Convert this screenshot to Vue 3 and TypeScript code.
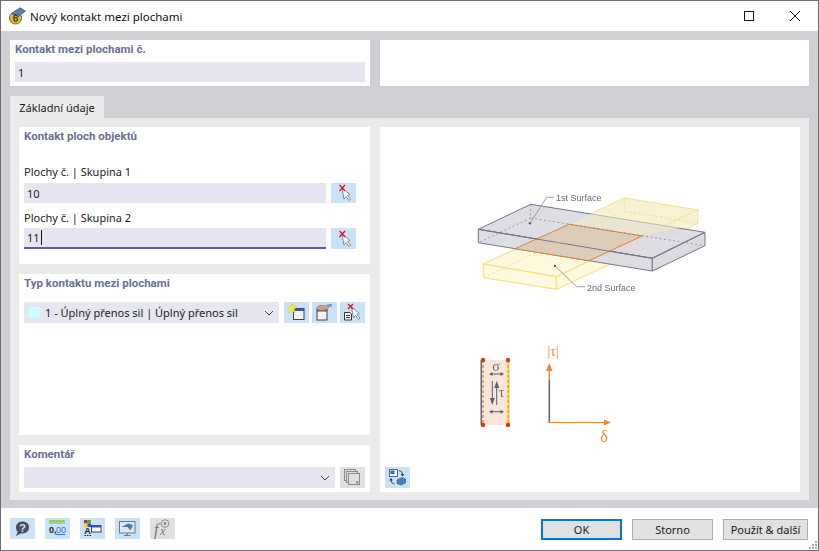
<script setup lang="ts">
const footerIcons = ["help", "units", "colors", "view", "formula"];
</script>

<template>
  <div class="dialog">
    <header class="titlebar">
      <svg class="app-icon" width="18" height="18" viewBox="0 0 18 18">
        <circle cx="6.500" cy="11" r="6" fill="#e6bf2e" stroke="#6b5a1c" stroke-width=".9" />
        <path d="M2.500 6.500 L11 .8 L16.500 4 L9 10 Z" fill="#5b7fa8" stroke="#34506f" stroke-width=".7" />
        <text x="6.500" y="15" class="app-six">6</text>
      </svg>
      <span class="title">Nový kontakt mezi plochami</span>
      <div class="window-buttons">
        <svg width="12" height="12" viewBox="0 0 12 12"><rect x="1.500" y="1.500" width="9" height="9" fill="none" stroke="#111" /></svg>
        <svg width="12" height="12" viewBox="0 0 12 12"><path d="M1 1 L11 11 M11 1 L1 11" stroke="#222" fill="none" /></svg>
      </div>
    </header>

    <main class="body">
      <div class="top-row">
        <section class="panel number-panel">
          <h3>Kontakt mezi plochami č.</h3>
          <div class="field">1</div>
        </section>
        <section class="panel"></section>
      </div>

      <div class="tab">Základní údaje</div>

      <div class="tab-content">
        <div class="left-col">
          <section class="panel objects">
            <h3>Kontakt ploch objektů</h3>
            <label class="first-label">Plochy č. | Skupina 1</label>
            <div class="input-row">
              <div class="field">10</div>
              <button class="icon-btn">
                <svg width="25" height="20" viewBox="0 0 25 20">
                  <path d="M11 5 L13 16 L15 13.500 L18 17.500 L19.500 16 L16.500 12.500 L19 11.500 Z" fill="#fff" stroke="#77808a" stroke-width=".9" />
                  <path d="M8.500 2 L14 8 M14 2 L8.500 8" stroke="#e0102a" stroke-width="1.300" />
                </svg>
              </button>
            </div>
            <label>Plochy č. | Skupina 2</label>
            <div class="input-row">
              <div class="field active"><span>11</span><i class="caret"></i></div>
              <button class="icon-btn tall">
                <svg width="25" height="20" viewBox="0 0 25 20">
                  <path d="M11 5 L13 16 L15 13.500 L18 17.500 L19.500 16 L16.500 12.500 L19 11.500 Z" fill="#fff" stroke="#77808a" stroke-width=".9" />
                  <path d="M8.500 2 L14 8 M14 2 L8.500 8" stroke="#e0102a" stroke-width="1.300" />
                </svg>
              </button>
            </div>
          </section>

          <section class="panel type">
            <h3>Typ kontaktu mezi plochami</h3>
            <div class="input-row type-row">
              <div class="select type-select">
                <i class="swatch"></i>
                <span>1 - Úplný přenos sil | Úplný přenos sil</span>
                <svg class="chevron" width="10" height="6" viewBox="0 0 10 6"><path d="M1 1 L5 5 L9 1" fill="none" stroke="#444" /></svg>
              </div>
              <button class="icon-btn">
                <svg width="25" height="21" viewBox="0 0 25 21">
                  <rect x="9.500" y="6.500" width="10.500" height="11" fill="#f2f2f2" stroke="#444" />
                  <rect x="9.500" y="6.500" width="10.500" height="2.500" fill="#3a55b0" />
                  <path d="M8 1 L9.300 4.700 L13.200 4.800 L10.100 7.200 L11.200 11 L8 8.800 L4.800 11 L5.900 7.200 L2.800 4.800 L6.700 4.700 Z" fill="#f6ee2c" stroke="#d8c81e" stroke-width=".4" />
                </svg>
              </button>
              <button class="icon-btn">
                <svg width="25" height="21" viewBox="0 0 25 21">
                  <rect x="5" y="7.500" width="10" height="10.500" fill="#f2f2f2" stroke="#444" />
                  <rect x="5" y="7.500" width="10" height="2" fill="#555" />
                  <path d="M4 6 Q7 2 12 3.500 L17 4 L16 7 L11 8.500 Q6 9 4 6 Z" fill="#c9a183" stroke="#8c705c" stroke-width=".5" />
                  <path d="M14 3 Q17 1.500 20 2 L19.500 5 L16 4.500 Z" fill="#6f97cf" />
                </svg>
              </button>
              <button class="icon-btn">
                <svg width="25" height="21" viewBox="0 0 25 21">
                  <path d="M11.500 5 L13.500 16 L15.500 13.500 L18.500 17.500 L20 16 L17 12.500 L19.500 11.500 Z" fill="#fff" stroke="#77808a" stroke-width=".9" />
                  <path d="M8 2 L13 7 M13 2 L8 7" stroke="#e0102a" stroke-width="1.300" />
                  <path d="M4.500 10.500 H9.500 L11.500 12 V18 H4.500 Z" fill="#fff" stroke="#333" />
                  <path d="M6 13.500 H10 M6 15.500 H10" stroke="#333" />
                </svg>
              </button>
            </div>
          </section>

          <section class="panel comment">
            <h3>Komentář</h3>
            <div class="input-row comment-row">
              <div class="select">
                <svg class="chevron" width="10" height="6" viewBox="0 0 10 6"><path d="M1 1 L5 5 L9 1" fill="none" stroke="#444" /></svg>
              </div>
              <button class="icon-btn disabled">
                <svg width="25" height="21" viewBox="0 0 25 21" fill="#e0e0e0" stroke="#8c8c8c">
                  <rect x="4.500" y="2.500" width="11" height="11" />
                  <rect x="6.500" y="4.500" width="11" height="11" />
                  <rect x="8.500" y="6.500" width="11" height="11" />
                  <rect x="16" y="14" width="2.500" height="2.500" fill="#999" stroke="none" />
                </svg>
              </button>
            </div>
          </section>
        </div>

        <section class="panel preview">
          <svg class="diagram" viewBox="380 127 420 340" width="420" height="340">
            <!-- yellow slab, lower -->
            <g stroke="#f5dc7a" stroke-width="1" stroke-linejoin="round">
              <path d="M483.300 264 L556.300 276.700 L697.700 210 L624.300 198 Z" fill="#fff9dd" />
              <path d="M483.300 264 L556.300 276.700 L556.300 289.300 L483.300 277.700 Z" fill="#fff9dd" />
              <path d="M556.300 276.700 L697.700 210 L697.700 223.300 L556.300 289.300 Z" fill="#fff9dd" />
            </g>
            <!-- grey slab -->
            <g stroke="#77758a" stroke-width="1" stroke-linejoin="round">
              <path d="M530.700 204.300 L705 232.300 L652.300 258.300 L478.300 229.300 Z" fill="#d8d7df" fill-opacity=".85" />
              <path d="M478.300 229.300 L652.300 258.300 L652.300 271 L478.300 242.700 Z" fill="#d8d7df" fill-opacity=".85" />
              <path d="M652.300 258.300 L705 232.300 L705 245.700 L652.300 271 Z" fill="#dcdbe2" />
            </g>
            <!-- overlap of both slabs -->
            <path d="M624.300 198 L697.700 210 L697.700 223.300 L642 236 L569.300 224.300 Z" fill="#f2ecc8" fill-opacity=".55" stroke="none" />
            <path d="M569.300 224.300 L642 236 L589 260.700 L515 248.700 Z" fill="#ddcdb8" stroke="#d8853c" stroke-width="1" />
            <path d="M478.300 229.300 L652.300 258.300 L705 232.300" fill="none" stroke="#77758a" />
            <!-- hidden edges -->
            <path d="M530.700 204.300 L530.700 218 M530.700 218 L705 245.700 M530.700 218 L478.300 242.700" fill="none" stroke="#8a8898" stroke-width=".8" stroke-dasharray="2 2.500" />
            <path d="M624.300 198 L624.300 211 L697.700 223.300 M624.300 211 L483.300 277.700" fill="none" stroke="#f0d877" stroke-width=".8" stroke-dasharray="2 2.500" />
            <!-- leaders -->
            <circle cx="530" cy="223.300" r="1.200" fill="#555" />
            <circle cx="555" cy="266" r="1.200" fill="#555" />
            <path d="M530 223.300 L546.700 197.300 L554 197.300" fill="none" stroke="#8a8a96" stroke-width=".8" />
            <path d="M555 266 L576.700 286.700 L585 286.700" fill="none" stroke="#8a8a96" stroke-width=".8" />
            <text x="556" y="200.700" class="dia-label">1st Surface</text>
            <text x="587" y="291" class="dia-label">2nd Surface</text>

            <!-- stress element -->
            <rect x="483" y="360" width="25" height="65" fill="#fae6d8" />
            <path d="M481.300 360 V425" stroke="#66647a" stroke-width="1.600" />
            <path d="M483 360 V425" stroke="#ec8a34" stroke-width="1.400" stroke-dasharray="3 2" />
            <path d="M508.300 360 V425" stroke="#f8dc70" stroke-width="3" />
            <path d="M508.300 360 V425" stroke="#ec8a34" stroke-width="1.200" stroke-dasharray="3 2" />
            <circle cx="483" cy="360" r="2.200" fill="#c8401a" />
            <circle cx="508" cy="360" r="2.200" fill="#c8401a" />
            <circle cx="483" cy="425" r="2.200" fill="#c8401a" />
            <circle cx="508" cy="425" r="2.200" fill="#c8401a" />
            <g stroke="#5d5c70" fill="#5d5c70" stroke-width="1">
              <path d="M491 374 H502 M491 411.700 H502" />
              <path d="M489 374 L492.500 372 V376 Z M504 374 L500.500 372 V376 Z" stroke="none" />
              <path d="M489 411.700 L492.500 409.700 V413.700 Z M504 411.700 L500.500 409.700 V413.700 Z" stroke="none" />
              <path d="M492.300 381 V400 M496.700 386 V405" />
              <path d="M492.300 405 L489.800 398 H494.800 Z M496.700 381 L494.200 388 H499.200 Z" stroke="none" />
            </g>
            <text x="496" y="371" class="greek grey">σ</text>
            <text x="501.500" y="397" class="greek grey">τ</text>

            <!-- chart axes -->
            <path d="M549.300 422.500 V380" stroke="#66647a" stroke-width="1.600" />
            <path d="M549.300 380 V368" stroke="#ec8a34" stroke-width="1.400" />
            <path d="M549.300 363 L546 371 H552.600 Z" fill="#ec8a34" />
            <path d="M549 422.500 H606" stroke="#ec8a34" stroke-width="1.200" />
            <path d="M611 422.500 L604 419.500 V425.500 Z" fill="#ec8a34" />
            <text x="553" y="356" class="greek orange">|τ|</text>
            <text x="604" y="442" class="greek orange big">δ</text>
          </svg>
          <div class="preview-foot">
            <button class="icon-btn">
              <svg width="25" height="21" viewBox="0 0 25 21">
                <rect x="4.500" y="2.500" width="8" height="7" fill="#fff" stroke="#3a67c4" />
                <rect x="5.500" y="3.500" width="4" height="3.500" fill="#3a67c4" />
                <path d="M12 13 L17 10.500 L20.500 12 V16 L15.500 18 L12 16.500 Z" fill="#4d7ebd" stroke="#2f5688" stroke-width=".6" />
                <path d="M14 3.500 Q17.500 4 17.500 7.500 M9.500 17 Q6 16.500 6 13" fill="none" stroke="#333" stroke-width=".9" />
                <path d="M15.800 7 H19.200 L17.500 9.500 Z M4.300 13.500 H7.700 L6 11 Z" fill="#333" />
              </svg>
            </button>
          </div>
        </section>
      </div>
    </main>

    <footer class="footer">
      <div class="tools">
        <button v-for="name in footerIcons" :key="name" class="icon-btn" :class="{ disabled: name === 'formula' }">
          <svg v-if="name === 'help'" width="25" height="21" viewBox="0 0 25 21">
            <path d="M12.500 3.500 C8 3.500 6 6.500 6 9.500 C6 11.500 6.700 12.700 7.800 13.700 L6 18 L11 15.300 C15.500 16 19 13.500 19 9.500 C19 6 16.500 3.500 12.500 3.500 Z" fill="#4d4d55" />
            <text x="12.700" y="13.500" class="help-mark">?</text>
          </svg>
          <svg v-else-if="name === 'units'" width="25" height="21" viewBox="0 0 25 21">
            <rect x="4" y="2" width="16" height="4" fill="#9ed27e" />
            <path d="M6 2 V4 M9 2 V4 M12 2 V4 M15 2 V4 M18 2 V4" stroke="#6a9c52" stroke-width=".6" />
            <text x="4" y="15" class="units dark">0,</text>
            <text x="11" y="15" class="units blue">00</text>
            <path d="M11 16.500 H20" stroke="#2f6fd8" />
          </svg>
          <svg v-else-if="name === 'colors'" width="25" height="21" viewBox="0 0 25 21">
            <rect x="4" y="2" width="3.500" height="3.500" fill="#e02020" />
            <rect x="7.500" y="2" width="3.500" height="3.500" fill="#38b838" />
            <rect x="4" y="5.500" width="3.500" height="3.500" fill="#e8d820" />
            <rect x="7.500" y="5.500" width="3.500" height="3.500" fill="#2850d8" />
            <text x="7.500" y="15.500" class="units dark center">A</text>
            <path d="M4.500 17.500 H6 M7 17.500 H8.500 M9.500 17.500 H11" stroke="#222" stroke-width="1.200" />
            <rect x="11.500" y="7.500" width="9.500" height="6.500" fill="#fff" stroke="#444" />
            <rect x="11.500" y="7.500" width="9.500" height="2" fill="#3a55b0" />
          </svg>
          <svg v-else-if="name === 'view'" width="25" height="21" viewBox="0 0 25 21">
            <rect x="4.500" y="3.500" width="15.500" height="11.500" fill="#dfe8f0" stroke="#6d7c88" />
            <path d="M6.500 9 L13 5.500 L18 7 L15.500 12.500 L12.500 9 Z" fill="#4a7cb0" />
            <path d="M12.300 15 V17 M9 17.500 H15.500" stroke="#6d7c88" stroke-width="1.200" />
          </svg>
          <svg v-else width="25" height="21" viewBox="0 0 25 21">
            <text x="4" y="17" class="formula">f</text>
            <text x="10" y="17" class="formula small">x</text>
            <circle cx="15" cy="5.500" r="3.800" fill="none" stroke="#8a8a8a" />
            <circle cx="15" cy="5.500" r="1.400" fill="#8a8a8a" />
          </svg>
        </button>
      </div>
      <div class="actions">
        <button class="btn primary">OK</button>
        <button class="btn">Storno</button>
        <button class="btn wide">Použít &amp; další</button>
      </div>
      <svg class="grip" width="10" height="10" viewBox="0 0 10 10" fill="#a8a8a8">
        <rect x="7" y="1" width="2" height="2" />
        <rect x="4" y="4" width="2" height="2" />
        <rect x="7" y="4" width="2" height="2" />
        <rect x="1" y="7" width="2" height="2" />
        <rect x="4" y="7" width="2" height="2" />
        <rect x="7" y="7" width="2" height="2" />
      </svg>
    </footer>
  </div>
</template>

<style scoped>
.dialog {
  width: 819px;
  height: 551px;
  box-sizing: border-box;
  border: 1px solid #6e6e6e;
  background: #fff;
  display: flex;
  flex-direction: column;
  font-family: "Noto Sans", "Open Sans", sans-serif;
  font-size: 11px;
  color: #1a1a1a;
  overflow: hidden;
}

.titlebar {
  height: 30px;
  display: flex;
  align-items: center;
  padding-left: 8px;
  flex: none;
}

.app-icon {
  margin-right: 3px;
}

.app-six {
  font: bold 10px "Liberation Sans", sans-serif;
  fill: #4a3c10;
  text-anchor: middle;
}

.title {
  font-size: 11.5px;
  color: #111;
}

.window-buttons {
  margin-left: auto;
  display: flex;
  gap: 34px;
  padding-right: 17px;
  align-items: center;
}

.window-buttons svg {
  display: block;
}

.body {
  height: 477px;
  flex: none;
  background: #d0d0d4;
  padding: 9px 9px 7px;
  box-sizing: border-box;
  display: flex;
  flex-direction: column;
}

.top-row {
  display: grid;
  grid-template-columns: 360px 429px;
  gap: 10px;
  height: 46px;
  flex: none;
}

.panel {
  background: #fff;
  box-sizing: border-box;
}

h3 {
  margin: 0;
  font-family: Roboto, "Noto Sans", sans-serif;
  font-size: 11.5px;
  font-weight: 700;
  color: #6a7096;
  line-height: 16px;
}

.number-panel {
  padding: 1px 5px 4px;
}

.number-panel h3 {
  margin-bottom: 5px;
}

.field {
  height: 20px;
  line-height: 22px;
  background: #e6e6f0;
  padding-left: 3px;
  box-sizing: border-box;
}

.tab {
  margin-top: 10px;
  width: 94px;
  height: 22px;
  line-height: 24px;
  background: #ebebeb;
  text-align: center;
  flex: none;
}

.tab-content {
  background: #ebebeb;
  height: 382px;
  flex: none;
  padding: 9px 9px 8px;
  box-sizing: border-box;
  display: grid;
  grid-template-columns: 351px 420px;
  gap: 10px;
}

.left-col {
  display: flex;
  flex-direction: column;
  gap: 10px;
}

.objects {
  height: 137px;
  padding: 1px 14px 0 5px;
}

.objects label {
  display: block;
  line-height: 16px;
  margin: 7px 0 2px;
}

.objects .first-label {
  margin-top: 20px;
  margin-bottom: 3px;
}

.input-row {
  display: flex;
  gap: 5px;
}

.input-row .field {
  flex: 1;
}

.field.active {
  height: 21px;
  border-bottom: 2px solid #5a5ea8;
  line-height: 20px;
  display: flex;
  align-items: center;
}

.caret {
  width: 1px;
  height: 15px;
  background: #111;
  margin-left: 1px;
}

.type {
  height: 161px;
  padding: 1px 5px 0;
}

.type-row {
  margin-top: 11px;
  gap: 3px;
}

.comment {
  height: 47px;
  padding: 1px 5px 0;
}

.comment-row {
  margin-top: 5px;
}

.select {
  flex: 1;
  height: 21px;
  background: #e6e6f0;
  display: flex;
  align-items: center;
  padding: 0 5px;
  box-sizing: border-box;
}

.type-select {
  margin-right: 2px;
}

.swatch {
  width: 11px;
  height: 11px;
  background: #ccffff;
  margin-right: 5px;
}

.chevron {
  margin-left: auto;
}

.icon-btn {
  width: 25px;
  height: 20px;
  padding: 0;
  border: 0;
  background: #c9e2f7;
  flex: none;
  display: flex;
  align-items: center;
  justify-content: center;
  overflow: hidden;
}

.type-row .icon-btn,
.comment-row .icon-btn,
.icon-btn.tall,
.preview-foot .icon-btn,
.tools .icon-btn {
  height: 21px;
}

.icon-btn.disabled {
  background: #e0e0e0;
}

.preview {
  display: flex;
  flex-direction: column;
}

.diagram {
  display: block;
  flex: none;
  filter: blur(0.3px);
}

.dia-label {
  font: 9px "Liberation Sans", sans-serif;
  fill: #6b6a7c;
}

.greek {
  font: 14px "Liberation Serif", serif;
  text-anchor: middle;
}

.greek.big {
  font-size: 16px;
}

.greek.grey {
  fill: #6b6a7c;
}

.greek.orange {
  fill: #ec8a34;
}

.preview-foot {
  padding-left: 5px;
}

.help-mark {
  font: bold 11px "Liberation Sans", sans-serif;
  fill: #c9e2f7;
  text-anchor: middle;
}

.units {
  font: bold 9px "Liberation Sans", sans-serif;
}

.units.dark {
  fill: #222;
}

.units.blue {
  fill: #2f6fd8;
  font-weight: 400;
}

.units.center {
  text-anchor: middle;
}

.formula {
  font: italic 16px "Liberation Serif", serif;
  fill: #777;
}

.formula.small {
  font-size: 12px;
}

.footer {
  flex: 1;
  position: relative;
  display: flex;
  justify-content: space-between;
  padding: 10px 10px 0 9px;
}

.tools {
  display: flex;
  gap: 10px;
}

.actions {
  display: flex;
  gap: 10px;
  margin-top: 1px;
}

.btn {
  width: 81px;
  height: 21px;
  padding: 0;
  background: #e1e1e1;
  border: 1px solid #adadad;
  font: inherit;
  color: #1a1a1a;
  box-sizing: border-box;
}

.btn.wide {
  width: 85px;
}

.btn.primary {
  border: 2px solid #0078d7;
}

.grip {
  position: absolute;
  right: 0;
  bottom: 0;
}
</style>

<style>
html,
body {
  margin: 0;
  background: #fff;
}
</style>
